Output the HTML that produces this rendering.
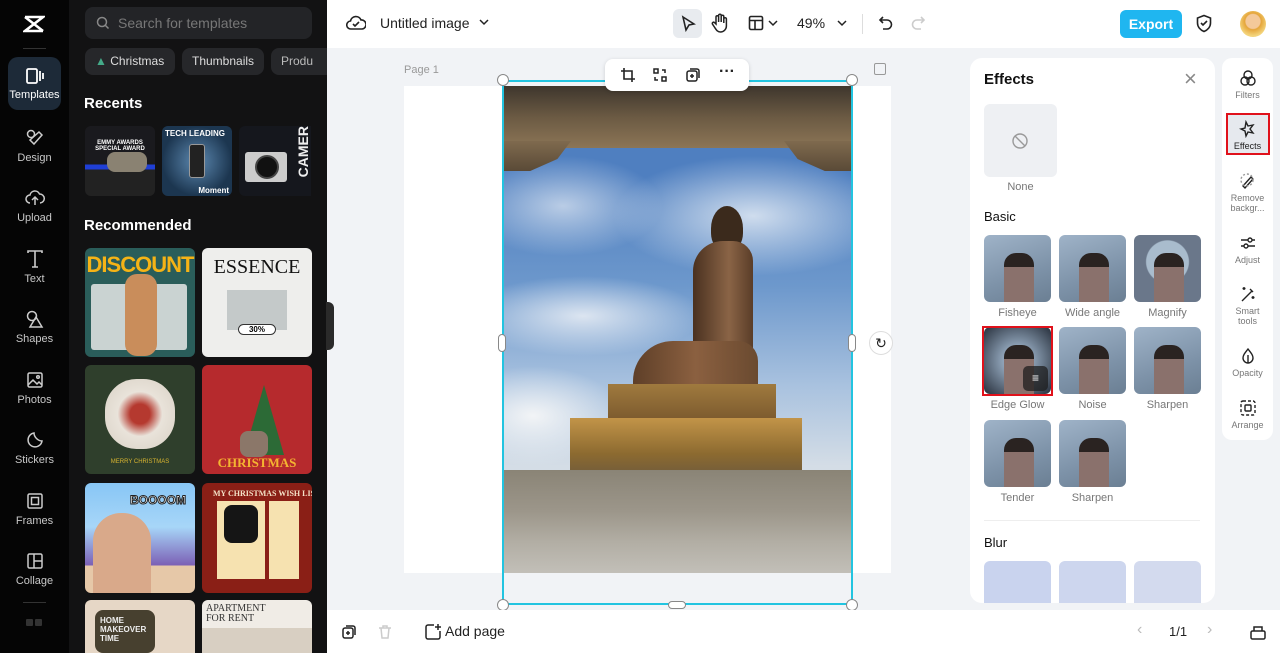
<!DOCTYPE html>
<html><head><meta charset="utf-8"><style>
*{box-sizing:border-box;margin:0;padding:0}
body{width:1280px;height:653px;overflow:hidden;font-family:"Liberation Sans",sans-serif;background:#f1f3f6;position:relative}
.abs{position:absolute}
.rail{left:0;top:0;width:69px;height:653px;background:#050505}
.ri{position:absolute;left:0;width:69px;text-align:center;color:#c8c8c8;font-size:11px}
.ri svg{display:block;margin:0 auto 4px}
.panel{left:69px;top:0;width:258px;height:653px;background:#121213}
.chip{position:absolute;top:48px;height:27px;border-radius:8px;background:#26272a;color:#ddd;font-size:12px;line-height:27px;padding:0 10px}
.th{position:absolute;border-radius:6px;overflow:hidden}
.top{left:327px;top:0;width:953px;height:48px;background:#fff}
.bot{left:327px;top:610px;width:953px;height:43px;background:#fff}
.fx{left:970px;top:58px;width:245px;height:545px;background:#fff;border-radius:12px}
.tile{position:absolute;width:67px;height:67px;border-radius:6px;background:linear-gradient(160deg,#9fb3c8,#7d92a8 60%,#6b7f93);overflow:hidden}
.tile::after{content:"";position:absolute;left:20px;top:18px;width:30px;height:49px;border-radius:12px 12px 0 0;background:linear-gradient(#2a2321 0 14px,#8a716c 14px)}
.lbl{position:absolute;width:67px;text-align:center;font-size:11px;color:#777}
.tb{left:1222px;top:58px;width:51px;height:382px;background:#fff;border-radius:10px}
.ti{position:absolute;left:0;width:51px;text-align:center;font-size:9px;color:#777;line-height:10px}
.ti svg{display:block;margin:0 auto 3px}
</style></head><body>

<div class="abs rail">
 <svg class="abs" style="left:23px;top:14px" width="22" height="20" viewBox="0 0 22 20" fill="none" stroke="#fff" stroke-width="2.6"><path d="M2 3h18L2 17h18"/><path d="M2 3l18 14"/></svg>
 <div class="abs" style="left:23px;top:48px;width:23px;height:1px;background:#333"></div>
 <div class="abs" style="left:8px;top:57px;width:53px;height:53px;border-radius:10px;background:#1d2a38"></div>
 <div class="ri" style="top:67px;color:#fff"><svg width="20" height="18" viewBox="0 0 20 18" fill="none" stroke="#fff" stroke-width="1.8"><rect x="2" y="2" width="10" height="14" rx="1.5"/><path d="M15 4v10M18 6v6"/></svg>Templates</div>
 <div class="ri" style="top:128px"><svg width="20" height="20" viewBox="0 0 20 20" fill="none" stroke="#ccc" stroke-width="1.5"><circle cx="6" cy="6" r="3.5"/><path d="M9 16l8-9-3-3-9 8z"/></svg>Design</div>
 <div class="ri" style="top:188px"><svg width="20" height="20" viewBox="0 0 20 20" fill="none" stroke="#ccc" stroke-width="1.5"><path d="M5 15a4 4 0 010-8 5 5 0 019.5-1A4 4 0 0115 15M10 9v8M7 12l3-3 3 3"/></svg>Upload</div>
 <div class="ri" style="top:249px"><svg width="20" height="20" viewBox="0 0 20 20" fill="none" stroke="#ccc" stroke-width="1.6"><path d="M3 4V2h14v2M10 2v16M7 18h6"/></svg>Text</div>
 <div class="ri" style="top:309px"><svg width="20" height="20" viewBox="0 0 20 20" fill="none" stroke="#ccc" stroke-width="1.5"><circle cx="7" cy="7" r="4.5"/><path d="M11 8l6 10H5z"/></svg>Shapes</div>
 <div class="ri" style="top:370px"><svg width="20" height="20" viewBox="0 0 20 20" fill="none" stroke="#ccc" stroke-width="1.5"><rect x="3" y="3" width="14" height="14" rx="1.5"/><path d="M3 15l5-5 4 4 2-2 3 3"/><circle cx="13" cy="7" r="1.3"/></svg>Photos</div>
 <div class="ri" style="top:430px"><svg width="20" height="20" viewBox="0 0 20 20" fill="none" stroke="#ccc" stroke-width="1.5"><path d="M17 11a7 7 0 11-8-8c0 4 4 8 8 8z"/></svg>Stickers</div>
 <div class="ri" style="top:491px"><svg width="20" height="20" viewBox="0 0 20 20" fill="none" stroke="#ccc" stroke-width="1.5"><rect x="3" y="3" width="14" height="14" rx="1.5"/><rect x="6.5" y="6.5" width="7" height="7"/></svg>Frames</div>
 <div class="ri" style="top:551px"><svg width="20" height="20" viewBox="0 0 20 20" fill="none" stroke="#ccc" stroke-width="1.5"><rect x="3" y="3" width="14" height="14" rx="1.5"/><path d="M9 3v14M9 10h8"/></svg>Collage</div>
 <div class="abs" style="left:23px;top:602px;width:23px;height:1px;background:#333"></div>
 <div class="abs" style="left:26px;top:619px;width:7px;height:7px;background:#333;border-radius:1px"></div>
 <div class="abs" style="left:35px;top:619px;width:7px;height:7px;background:#333;border-radius:1px"></div>
</div>

<div class="abs panel">
 <div class="abs" style="left:16px;top:7px;width:227px;height:32px;border-radius:8px;background:#232427;color:#777;font-size:14px;line-height:32px;padding-left:33px">Search for templates
  <svg class="abs" style="left:11px;top:9px" width="14" height="14" viewBox="0 0 14 14" fill="none" stroke="#888" stroke-width="1.5"><circle cx="6" cy="6" r="4.5"/><path d="M9.5 9.5l3 3"/></svg></div>
 <div class="chip" style="left:16px;width:90px"><span style="color:#4a8">&#9650;</span> Christmas</div>
 <div class="chip" style="left:113px;width:82px">Thumbnails</div>
 <div class="chip" style="left:202px;width:56px;border-radius:8px 0 0 8px;color:#bbb">Produ</div>
 <div class="abs" style="left:15px;top:95px;color:#fff;font-weight:bold;font-size:15px">Recents</div>
 <div class="th" style="left:16px;top:126px;width:70px;height:70px;background:linear-gradient(#1a1a1e 0 55%,#1f3fd6 55% 62%,#222 62%)"><div style="color:#fff;font-size:6px;font-weight:bold;text-align:center;margin-top:14px">EMMY AWARDS<br>SPECIAL AWARD</div><div style="position:absolute;left:22px;top:26px;width:40px;height:20px;border-radius:8px;background:#8a8272"></div></div>
 <div class="th" style="left:93px;top:126px;width:70px;height:70px;background:radial-gradient(circle at 50% 50%,#5c88b0,#1c3650 70%)"><div style="color:#fff;font-size:8px;font-weight:bold;margin:3px">TECH LEADING</div><div style="position:absolute;left:27px;top:18px;width:16px;height:34px;border-radius:3px;background:#222;border:1px solid #999"></div><div style="position:absolute;right:3px;bottom:1px;color:#fff;font-size:8px;font-weight:bold">Moment</div></div>
 <div class="th" style="left:170px;top:126px;width:72px;height:70px;background:#15171d;border-radius:6px 0 0 6px"><div style="position:absolute;left:6px;top:26px;width:42px;height:30px;background:#ccc;border-radius:3px"></div><div style="position:absolute;left:16px;top:29px;width:24px;height:24px;border-radius:50%;background:#111;border:2px solid #444"></div><div style="position:absolute;right:0;top:0;color:#eee;font-size:14px;font-weight:bold;writing-mode:vertical-rl;transform:rotate(180deg)">CAMER</div></div>
 <div class="abs" style="left:15px;top:217px;color:#fff;font-weight:bold;font-size:15px">Recommended</div>
 <div class="th" style="left:16px;top:248px;width:110px;height:109px;background:#2a5d5a"><div style="color:#f5b316;font-weight:bold;font-size:22px;text-align:center;margin-top:4px;letter-spacing:-1px">DISCOUNT</div><div style="position:absolute;left:6px;top:36px;width:96px;height:66px;background:#e6e8e8;opacity:.85;border-radius:3px"></div><div style="position:absolute;left:40px;top:26px;width:32px;height:82px;background:#c98d5b;border-radius:12px"></div></div>
 <div class="th" style="left:133px;top:248px;width:110px;height:109px;background:#eeeeec"><div style="font-family:'Liberation Serif',serif;font-size:20px;text-align:center;margin-top:8px;color:#111">ESSENCE</div><div style="position:absolute;left:25px;top:42px;width:60px;height:40px;background:#c4c9c9"></div><div style="position:absolute;left:36px;top:76px;width:38px;height:11px;border:1px solid #333;border-radius:6px;font-size:8px;font-weight:bold;text-align:center;background:#fff">30%</div></div>
 <div class="th" style="left:16px;top:365px;width:110px;height:109px;background:#2f3f2c"><div style="position:absolute;left:20px;top:14px;width:70px;height:70px;border-radius:45%;background:radial-gradient(#b5392f 20%,#e9e3da 45%,#d8d0c4)"></div><div style="position:absolute;left:0;width:110px;top:94px;text-align:center;color:#d8b430;font-size:6px">MERRY CHRISTMAS</div></div>
 <div class="th" style="left:133px;top:365px;width:110px;height:109px;background:#b62a2d"><div style="position:absolute;left:42px;top:20px;width:0;height:0;border-left:20px solid transparent;border-right:20px solid transparent;border-bottom:70px solid #2c6a36"></div><div style="position:absolute;left:38px;top:66px;width:28px;height:26px;background:#8b7769;border-radius:8px"></div><div style="position:absolute;width:110px;top:90px;text-align:center;color:#f4b431;font-size:13px;font-family:'Liberation Serif',serif;font-weight:bold">CHRISTMAS</div></div>
 <div class="th" style="left:16px;top:483px;width:110px;height:110px;background:linear-gradient(#88c6f5,#a7d6f8 40%,#7b5fb5 75%,#e6c8a8 75%)"><div style="position:absolute;left:8px;top:30px;width:58px;height:80px;background:#d9a98a;border-radius:28px 28px 0 0"></div><div style="position:absolute;left:45px;top:10px;color:#fff;font-weight:bold;font-size:12px;-webkit-text-stroke:1px #222">BOOOOM</div></div>
 <div class="th" style="left:133px;top:483px;width:110px;height:110px;background:#8a1f16"><div style="color:#f4e3c8;font-size:8px;font-weight:bold;margin:6px 0 0 11px;font-family:'Liberation Serif',serif;white-space:nowrap">MY CHRISTMAS WISH LIST</div><div style="position:absolute;left:15px;top:18px;width:48px;height:78px;background:#f6e2b0"></div><div style="position:absolute;left:67px;top:18px;width:30px;height:78px;background:#f6e2b0"></div><div style="position:absolute;left:22px;top:22px;width:34px;height:38px;background:#151515;border-radius:8px"></div></div>
 <div class="th" style="left:16px;top:600px;width:110px;height:53px;background:#e6d7c6;border-radius:6px 6px 0 0"><div style="position:absolute;left:10px;top:10px;width:60px;height:43px;background:#47402f;border-radius:8px;color:#eee;font-size:8px;font-weight:bold;padding:6px 0 0 5px">HOME<br>MAKEOVER TIME</div></div>
 <div class="th" style="left:133px;top:600px;width:110px;height:53px;background:#f0ece6;border-radius:6px 6px 0 0"><div style="font-family:'Liberation Serif',serif;font-size:10px;color:#333;margin:4px 0 0 4px;line-height:10px">APARTMENT<br>FOR RENT</div><div style="position:absolute;left:0;top:28px;width:110px;height:25px;background:#d8cfc2"></div></div>
</div>
<div class="abs" style="left:326px;top:302px;width:8px;height:48px;background:#2a2a2a;border-radius:0 6px 6px 0"></div>

<div class="abs top">
 <svg class="abs" style="left:19px;top:14px" width="20" height="18" viewBox="0 0 20 18" fill="none" stroke="#222" stroke-width="1.6"><path d="M5 15a4 4 0 01-.5-8A5.5 5.5 0 0115 6a4.5 4.5 0 011 9z"/><path d="M7 10l2 2 4-4"/></svg>
 <div class="abs" style="left:53px;top:15px;font-size:14px;color:#222">Untitled image</div>
 <svg class="abs" style="left:152px;top:18px" width="10" height="8" viewBox="0 0 10 8" fill="none" stroke="#222" stroke-width="1.5"><path d="M1 2l4 4 4-4"/></svg>
 <div class="abs" style="left:346px;top:9px;width:29px;height:29px;border-radius:6px;background:#e8ebef"></div>
 <svg class="abs" style="left:353px;top:15px" width="16" height="17" viewBox="0 0 16 17" fill="none" stroke="#222" stroke-width="1.6"><path d="M3 2l11 7-5 1-3 5z"/></svg>
 <svg class="abs" style="left:384px;top:13px" width="18" height="20" viewBox="0 0 18 20" fill="none" stroke="#222" stroke-width="1.5"><path d="M5 11V4a1.3 1.3 0 012.6 0v5V2.5a1.3 1.3 0 012.6 0V9V3.5a1.3 1.3 0 012.6 0V10V6a1.3 1.3 0 012.6 0v7a6 6 0 01-6 6c-3 0-4-2-6-5l-2-3a1.3 1.3 0 012-1.5z"/></svg>
 <svg class="abs" style="left:421px;top:15px" width="16" height="16" viewBox="0 0 16 16" fill="none" stroke="#222" stroke-width="1.6"><rect x="1.5" y="1.5" width="13" height="13" rx="1.5"/><path d="M1.5 5.5h13M7 5.5v9"/></svg>
 <svg class="abs" style="left:441px;top:20px" width="10" height="7" viewBox="0 0 10 7" fill="none" stroke="#222" stroke-width="1.5"><path d="M1 1l4 4 4-4"/></svg>
 <div class="abs" style="left:470px;top:15px;font-size:14px;color:#222">49%</div>
 <svg class="abs" style="left:510px;top:20px" width="10" height="7" viewBox="0 0 10 7" fill="none" stroke="#222" stroke-width="1.5"><path d="M1 1l4 4 4-4"/></svg>
 <div class="abs" style="left:535px;top:14px;width:1px;height:20px;background:#ddd"></div>
 <svg class="abs" style="left:551px;top:15px" width="16" height="16" viewBox="0 0 16 16" fill="none" stroke="#222" stroke-width="1.6"><path d="M5 2L2 5l3 3M2 5h7a4.5 4.5 0 010 9H5"/></svg>
 <svg class="abs" style="left:583px;top:15px" width="16" height="16" viewBox="0 0 16 16" fill="none" stroke="#ccc" stroke-width="1.6"><path d="M11 2l3 3-3 3M14 5H7a4.5 4.5 0 000 9h4"/></svg>
 <div class="abs" style="left:793px;top:10px;width:62px;height:28px;border-radius:6px;background:#1fb6f0;color:#fff;font-weight:bold;font-size:14px;text-align:center;line-height:28px">Export</div>
 <svg class="abs" style="left:868px;top:14px" width="18" height="19" viewBox="0 0 18 19" fill="none" stroke="#222" stroke-width="1.6"><path d="M9 1.5l6.5 2.5v5c0 4-3 7-6.5 8.5C5.5 16 2.5 13 2.5 9V4z"/><path d="M6 9l2 2 4-4"/></svg>
 <div class="abs" style="left:913px;top:11px;width:26px;height:26px;border-radius:50%;background:radial-gradient(circle at 50% 40%,#f4c99a 35%,#e5a53a 40%,#f3d37a 70%)"></div>
</div>

<div class="abs" style="left:404px;top:64px;font-size:11px;color:#999">Page 1</div>
<div class="abs" style="left:874px;top:63px;width:12px;height:12px;border:1.5px solid #999;border-radius:2px"></div>
<div class="abs" style="left:404px;top:86px;width:487px;height:487px;background:#fff"></div>
<div class="abs" style="left:503px;top:86px;width:349px;height:487px;overflow:hidden;background:
radial-gradient(ellipse 90px 50px at 30px 330px,#f2f4f6,rgba(240,240,240,0) 100%),
radial-gradient(ellipse 120px 40px at 80px 230px,rgba(230,236,244,.9),rgba(230,236,244,0)),
radial-gradient(ellipse 140px 60px at 250px 130px,rgba(220,230,242,.9),rgba(220,230,242,0)),
radial-gradient(ellipse 100px 50px at 60px 120px,rgba(210,222,238,.8),rgba(210,222,238,0)),
linear-gradient(#4f7fc0 0,#4f7fc0 90px,#6d98cc 200px,#a9c2df 300px,#d4dde6 380px)">
 <div style="position:absolute;left:0;top:0;width:349px;height:62px;background:linear-gradient(#3e362d,#6b5a43 50%,#8c7556)"></div>
 <div style="position:absolute;left:0;top:55px;width:68px;height:30px;background:linear-gradient(#7f6a4e,#5a4a37);clip-path:polygon(0 0,100% 0,80% 60%,40% 100%,0 100%)"></div>
 <div style="position:absolute;left:281px;top:55px;width:68px;height:30px;background:linear-gradient(#7f6a4e,#5a4a37);clip-path:polygon(0 0,100% 0,100% 100%,60% 100%,20% 60%)"></div>
 <div style="position:absolute;left:208px;top:120px;width:32px;height:45px;border-radius:50% 50% 40% 40%;background:#3b2a1c"></div>
 <div style="position:absolute;left:190px;top:155px;width:60px;height:150px;border-radius:30px 20px 6px 6px;background:linear-gradient(90deg,#4a3120,#8a6446 60%,#5a3d28)"></div>
 <div style="position:absolute;left:130px;top:255px;width:125px;height:50px;border-radius:40px 20px 4px 4px;background:linear-gradient(90deg,#5e3f28,#8b6040,#6a4a30)"></div>
 <div style="position:absolute;left:105px;top:298px;width:168px;height:36px;background:linear-gradient(#a07a3e,#7c5a2e)"></div>
 <div style="position:absolute;left:67px;top:332px;width:232px;height:60px;background:linear-gradient(#c29448,#8c6a30 60%,#6e5a3c)"></div>
 <div style="position:absolute;left:0;top:384px;width:349px;height:103px;background:linear-gradient(#8a8476,#9c968a 40%,#b2aea4 70%,#c2bfb8)"></div>
</div>
<div class="abs" style="left:502px;top:80px;width:351px;height:525px;border:2px solid #22c4e0"></div>
<div class="abs" style="left:497px;top:74px;width:12px;height:12px;border-radius:50%;background:#fff;border:1px solid #888"></div>
<div class="abs" style="left:846px;top:74px;width:12px;height:12px;border-radius:50%;background:#fff;border:1px solid #888"></div>
<div class="abs" style="left:497px;top:599px;width:12px;height:12px;border-radius:50%;background:#fff;border:1px solid #888"></div>
<div class="abs" style="left:846px;top:599px;width:12px;height:12px;border-radius:50%;background:#fff;border:1px solid #888"></div>
<div class="abs" style="left:668px;top:601px;width:18px;height:8px;border-radius:4px;background:#fff;border:1px solid #888"></div>
<div class="abs" style="left:498px;top:334px;width:8px;height:18px;border-radius:4px;background:#fff;border:1px solid #888"></div>
<div class="abs" style="left:848px;top:334px;width:8px;height:18px;border-radius:4px;background:#fff;border:1px solid #888"></div>
<div class="abs" style="left:869px;top:331px;width:24px;height:24px;border-radius:50%;background:#fff;border:1px solid #ddd;text-align:center;font-size:14px;line-height:22px;color:#222">&#8635;</div>
<div class="abs" style="left:605px;top:59px;width:144px;height:32px;background:#fff;border-radius:8px;box-shadow:0 1px 4px rgba(0,0,0,.15)">
 <svg class="abs" style="left:15px;top:8px" width="16" height="16" viewBox="0 0 16 16" fill="none" stroke="#222" stroke-width="1.6"><path d="M4 1v11h11M1 4h11v11"/></svg>
 <svg class="abs" style="left:47px;top:8px" width="16" height="16" viewBox="0 0 16 16" fill="none" stroke="#222" stroke-width="1.5"><rect x="2" y="2" width="4" height="4"/><rect x="10" y="10" width="4" height="4"/><path d="M10 3h3v3M6 13H3v-3"/></svg>
 <svg class="abs" style="left:80px;top:8px" width="16" height="16" viewBox="0 0 16 16" fill="none" stroke="#222" stroke-width="1.5"><rect x="2" y="4" width="10" height="10" rx="2"/><path d="M5 2h7a2 2 0 012 2v7M7 7v4M5 9h4"/></svg>
 <div class="abs" style="left:114px;top:4px;font-size:16px;font-weight:bold;color:#222">&middot;&middot;&middot;</div>
</div>

<div class="abs bot">
 <svg class="abs" style="left:14px;top:14px" width="16" height="16" viewBox="0 0 16 16" fill="none" stroke="#222" stroke-width="1.5"><rect x="2" y="4" width="10" height="10" rx="2"/><path d="M5 2h7a2 2 0 012 2v7M7 7v4M5 9h4"/></svg>
 <svg class="abs" style="left:50px;top:14px" width="16" height="16" viewBox="0 0 16 16" fill="none" stroke="#ccc" stroke-width="1.5"><path d="M2 4h12M6 4V2h4v2M4 4l1 10h6l1-10"/></svg>
 <svg class="abs" style="left:97px;top:13px" width="18" height="18" viewBox="0 0 18 18" fill="none" stroke="#222" stroke-width="1.5"><path d="M10 2H4a2 2 0 00-2 2v10a2 2 0 002 2h10a2 2 0 002-2V8M14 1v6M11 4h6"/></svg>
 <div class="abs" style="left:118px;top:13px;font-size:14px;color:#222">Add page</div>
 <div class="abs" style="left:810px;top:11px;font-size:16px;color:#bbb">&#8249;</div>
 <div class="abs" style="left:842px;top:14px;font-size:13px;color:#222">1/1</div>
 <div class="abs" style="left:880px;top:11px;font-size:16px;color:#bbb">&#8250;</div>
 <svg class="abs" style="left:922px;top:13px" width="18" height="18" viewBox="0 0 18 18" fill="none" stroke="#222" stroke-width="1.5"><rect x="2" y="8" width="14" height="8" rx="1.5"/><path d="M5 8V4h8v4"/></svg>
</div>

<div class="abs fx">
 <div class="abs" style="left:14px;top:13px;font-size:15px;font-weight:bold;color:#111">Effects</div>
 <div class="abs" style="left:214px;top:8px;font-size:22px;color:#888;font-weight:300">&times;</div>
 <div class="abs" style="left:14px;top:46px;width:73px;height:73px;border-radius:6px;background:#eef0f3"></div>
 <svg class="abs" style="left:41px;top:74px" width="18" height="18" viewBox="0 0 18 18" fill="none" stroke="#999" stroke-width="1.4"><circle cx="9" cy="9" r="7"/><path d="M4 4l10 10"/></svg>
 <div class="lbl" style="left:17px;top:123px">None</div>
 <div class="abs" style="left:14px;top:151px;font-size:13px;color:#111">Basic</div>
 <div class="tile" style="left:14px;top:177px"></div>
 <div class="tile" style="left:89px;top:177px"></div>
 <div class="tile" style="left:164px;top:177px;background:radial-gradient(circle at 50% 40%,#a9bccd 40%,#6a778a 42%)"></div>
 <div class="lbl" style="left:14px;top:249px">Fisheye</div>
 <div class="lbl" style="left:89px;top:249px">Wide angle</div>
 <div class="lbl" style="left:164px;top:249px">Magnify</div>
 <div class="tile" style="left:14px;top:269px;background:radial-gradient(#8fa3b8 30%,#2e3744 95%)"></div>
 <div class="abs" style="left:12px;top:268px;width:71px;height:70px;border:2px solid #e0111b"></div>
 <div class="abs" style="left:53px;top:308px;width:25px;height:25px;border-radius:5px;background:rgba(30,30,30,.75);color:#fff;font-size:12px;text-align:center;line-height:25px">&#8801;</div>
 <div class="tile" style="left:89px;top:269px"></div>
 <div class="tile" style="left:164px;top:269px"></div>
 <div class="lbl" style="left:14px;top:341px">Edge Glow</div>
 <div class="lbl" style="left:89px;top:341px">Noise</div>
 <div class="lbl" style="left:164px;top:341px">Sharpen</div>
 <div class="tile" style="left:14px;top:362px"></div>
 <div class="tile" style="left:89px;top:362px"></div>
 <div class="lbl" style="left:14px;top:434px">Tender</div>
 <div class="lbl" style="left:89px;top:434px">Sharpen</div>
 <div class="abs" style="left:14px;top:462px;width:216px;height:1px;background:#eee"></div>
 <div class="abs" style="left:14px;top:477px;font-size:13px;color:#111">Blur</div>
 <div class="abs" style="left:14px;top:503px;width:67px;height:42px;border-radius:6px 6px 0 0;background:#c9d3ee"></div>
 <div class="abs" style="left:89px;top:503px;width:67px;height:42px;border-radius:6px 6px 0 0;background:#cdd6ee"></div>
 <div class="abs" style="left:164px;top:503px;width:67px;height:42px;border-radius:6px 6px 0 0;background:#d3daee"></div>
</div>

<div class="abs tb">
 <div class="ti" style="top:11px"><svg width="18" height="18" viewBox="0 0 18 18" fill="none" stroke="#222" stroke-width="1.4"><circle cx="9" cy="6" r="4"/><circle cx="6" cy="12" r="4"/><circle cx="12" cy="12" r="4"/></svg>Filters</div>
 <div class="abs" style="left:4px;top:55px;width:44px;height:42px;background:#e6e9ee;border:2px solid #e0111b"></div>
 <div class="ti" style="top:62px;color:#222"><svg width="18" height="18" viewBox="0 0 18 18" fill="none" stroke="#222" stroke-width="1.4"><path d="M7 2l2 4 5-1-3 4 3 4-5-1-2 4-1-5-4-2 4-1z"/></svg>Effects</div>
 <div class="ti" style="top:114px"><svg width="18" height="18" viewBox="0 0 18 18" fill="none" stroke="#222" stroke-width="1.4"><path d="M4 14l8-9 2 2-8 9z" /><circle cx="8" cy="8" r="6" stroke-dasharray="2 2" stroke="#999"/></svg>Remove<br>backgr...</div>
 <div class="ti" style="top:176px"><svg width="18" height="18" viewBox="0 0 18 18" fill="none" stroke="#222" stroke-width="1.4"><path d="M2 6h14M2 12h14"/><circle cx="11" cy="6" r="2" fill="#fff"/><circle cx="7" cy="12" r="2" fill="#fff"/></svg>Adjust</div>
 <div class="ti" style="top:227px"><svg width="18" height="18" viewBox="0 0 18 18" fill="none" stroke="#222" stroke-width="1.4"><path d="M3 16L13 6M11 4l3 3M5 2v3M3.5 3.5h3M14 11v3M12.5 12.5h3"/></svg>Smart<br>tools</div>
 <div class="ti" style="top:289px"><svg width="18" height="18" viewBox="0 0 18 18" fill="none" stroke="#222" stroke-width="1.4"><path d="M9 2c3 4 5 6 5 9a5 5 0 01-10 0c0-3 2-5 5-9z"/><path d="M9 8v8"/></svg>Opacity</div>
 <div class="ti" style="top:341px"><svg width="18" height="18" viewBox="0 0 18 18" fill="none" stroke="#222" stroke-width="1.4"><rect x="2" y="2" width="14" height="14" rx="2" stroke-dasharray="3 2"/><rect x="6" y="6" width="6" height="6" rx="1"/></svg>Arrange</div>
</div>
</body></html>
